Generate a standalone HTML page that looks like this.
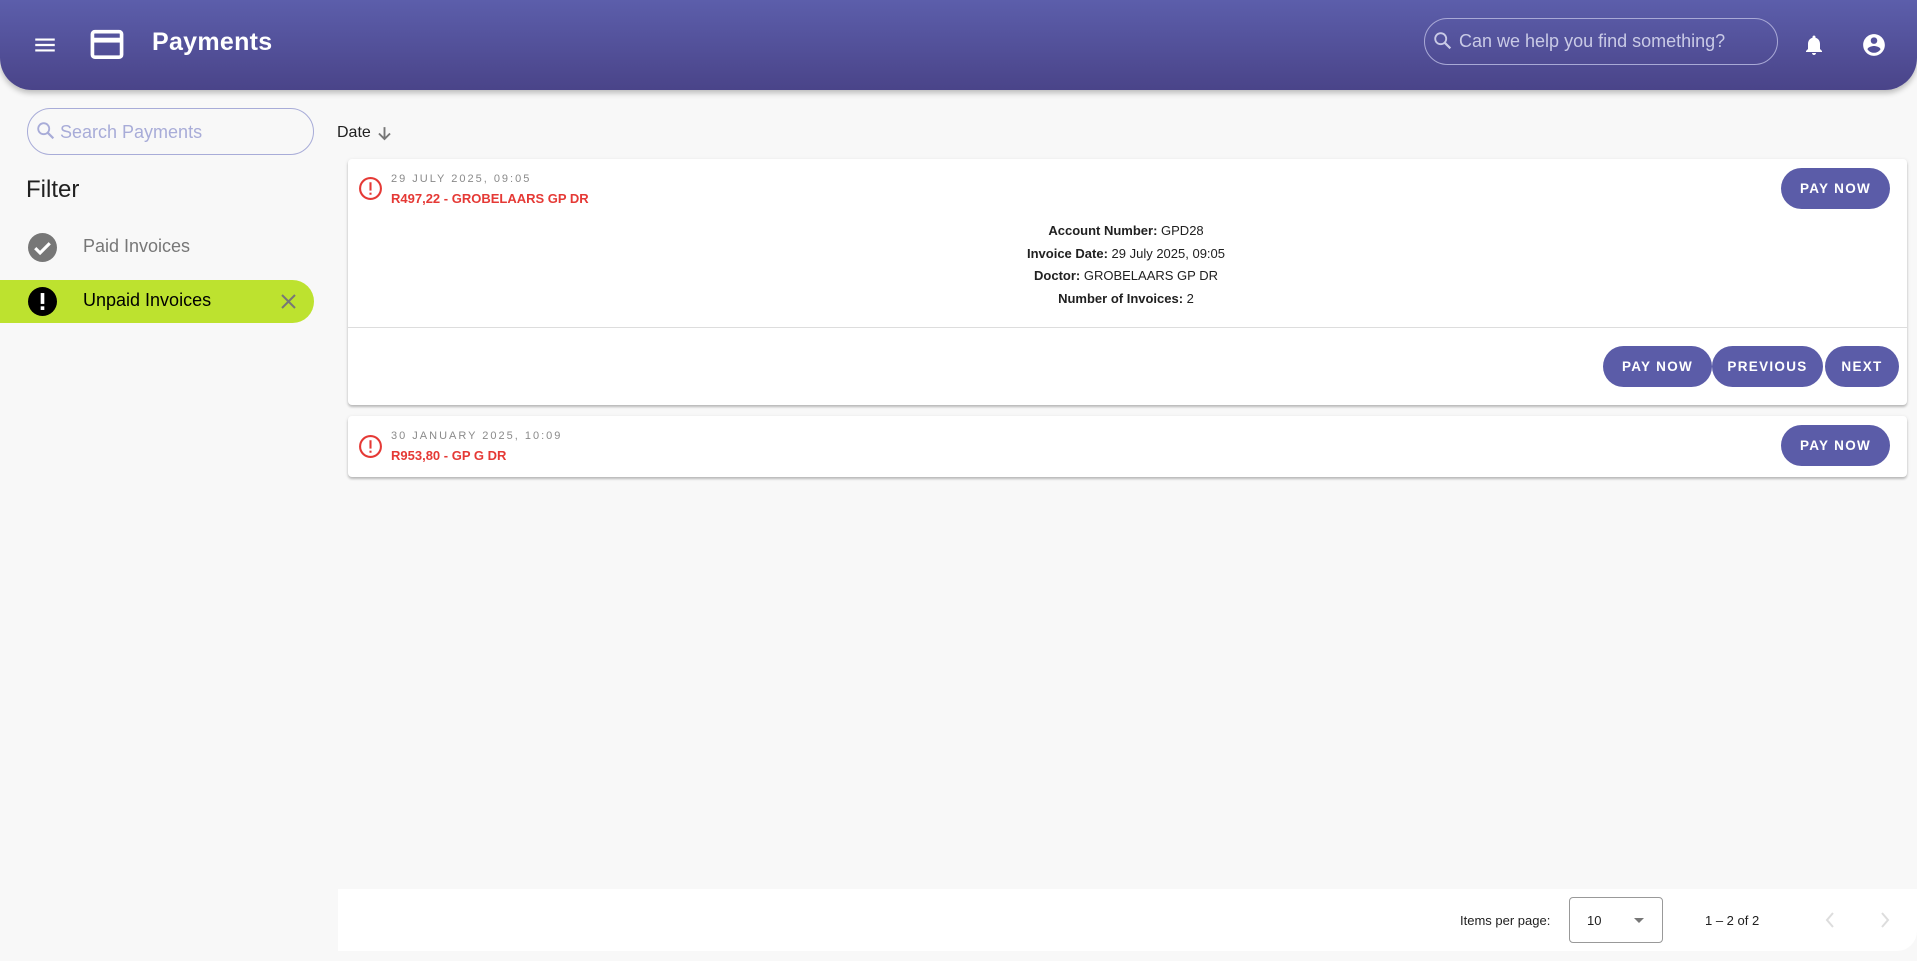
<!DOCTYPE html>
<html><head><meta charset="utf-8"><style>
*{box-sizing:border-box;margin:0;padding:0}
body{width:1917px;height:961px;background:#f8f8f8;font-family:"Liberation Sans",sans-serif;position:relative;overflow:hidden;color:#212121}
.abs{position:absolute}
.hdr{left:0;top:0;width:1917px;height:90px;background:linear-gradient(#5c5eab,#4a4489);border-radius:0 0 32px 32px;box-shadow:0 3px 6px rgba(0,0,0,.25)}
.btn{position:absolute;background:#5b5ca8;color:#fff;border-radius:21px;font-weight:bold;font-size:13.5px;letter-spacing:1.3px;display:flex;align-items:center;justify-content:center;height:41px}
.card{position:absolute;left:348px;width:1559px;background:#fff;border-radius:4px;box-shadow:0 2px 2px rgba(0,0,0,.2),0 1px 4px rgba(0,0,0,.1)}
.dt{position:absolute;left:43px;font-size:11px;letter-spacing:2px;color:#8a8a8a}
.amt{position:absolute;left:43px;font-size:13px;font-weight:bold;color:#e53935}
.det{position:absolute;left:0;width:1556px;text-align:center;font-size:13px;line-height:13px}
</style></head><body>
<div class="abs hdr"></div>
<svg class="abs" style="left:32px;top:32px" width="26" height="26" viewBox="0 0 24 24"><path d="M3 6h18v2H3zm0 5h18v2H3zm0 5h18v2H3z" fill="#fff"/></svg>
<svg class="abs" style="left:90px;top:28px" width="34" height="34" viewBox="0 0 28 28"><rect x="2" y="3" width="24" height="21" rx="2" fill="none" stroke="#fff" stroke-width="3"/><rect x="2" y="8" width="24" height="4" fill="#fff"/></svg>
<div class="abs" style="left:152px;top:28px;color:#fff;font-size:25px;font-weight:bold;letter-spacing:.3px">Payments</div>
<div class="abs" style="left:1424px;top:18px;width:354px;height:47px;border:1px solid #a9a9d6;border-radius:24px"></div>
<svg class="abs" style="left:1432px;top:30px" width="22" height="22" viewBox="0 0 24 24"><circle cx="9.5" cy="9.5" r="6" fill="none" stroke="#c9cae6" stroke-width="2"/><path d="M14 14l6 6" stroke="#c9cae6" stroke-width="2.4"/></svg>
<div class="abs" style="left:1459px;top:31px;color:#c9cae6;font-size:18px">Can we help you find something?</div>
<svg class="abs" style="left:1802px;top:32px" width="24" height="26" viewBox="0 0 24 24"><path d="M12 22c1.1 0 2-.9 2-2h-4c0 1.1.9 2 2 2zm6-6v-5c0-3.1-1.6-5.6-4.5-6.3V4c0-.8-.7-1.5-1.5-1.5s-1.5.7-1.5 1.5v.7C7.6 5.4 6 7.9 6 11v5l-2 2v1h16v-1l-2-2z" fill="#fff"/></svg>
<svg class="abs" style="left:1861px;top:32px" width="26" height="26" viewBox="0 0 24 24"><path d="M12 2C6.5 2 2 6.5 2 12s4.5 10 10 10 10-4.5 10-10S17.5 2 12 2zm0 3c1.7 0 3 1.3 3 3s-1.3 3-3 3-3-1.3-3-3 1.3-3 3-3zm0 14.2c-2.5 0-4.7-1.3-6-3.2 0-2 4-3.1 6-3.1s6 1.1 6 3.1c-1.3 1.9-3.5 3.2-6 3.2z" fill="#fff"/></svg>

<div class="abs" style="left:27px;top:108px;width:287px;height:47px;border:1px solid #a8acd8;border-radius:24px"></div>
<svg class="abs" style="left:35px;top:120px" width="22" height="22" viewBox="0 0 24 24"><circle cx="9.5" cy="9.5" r="6" fill="none" stroke="#a8acd8" stroke-width="2"/><path d="M14 14l6 6" stroke="#a8acd8" stroke-width="2.4"/></svg>
<div class="abs" style="left:60px;top:122px;color:#a8acd8;font-size:18px">Search Payments</div>
<div class="abs" style="left:26px;top:176px;font-size:24px">Filter</div>
<svg class="abs" style="left:28px;top:233px" width="29" height="29" viewBox="0 0 24 24"><circle cx="12" cy="12" r="12" fill="#777"/><path d="M6 12.5l4 4 8-8" fill="none" stroke="#fff" stroke-width="2.6"/></svg>
<div class="abs" style="left:83px;top:236px;color:#777;font-size:18px">Paid Invoices</div>
<div class="abs" style="left:0;top:280px;width:314px;height:43px;background:#bde22f;border-radius:0 22px 22px 0"></div>
<svg class="abs" style="left:28px;top:287px" width="29" height="29" viewBox="0 0 24 24"><circle cx="12" cy="12" r="12" fill="#000"/><rect x="10.5" y="5" width="3" height="9" fill="#fff"/><rect x="10.5" y="16" width="3" height="3" fill="#fff"/></svg>
<div class="abs" style="left:83px;top:290px;color:#000;font-size:18px">Unpaid Invoices</div>
<svg class="abs" style="left:280px;top:293px" width="17" height="17" viewBox="0 0 17 17"><path d="M2 2l13 13M15 2L2 15" stroke="#777" stroke-width="2"/></svg>

<div class="abs" style="left:337px;top:124px;font-size:16px">Date</div>
<svg class="abs" style="left:375px;top:124px" width="19" height="19" viewBox="0 0 24 24"><path d="M12 4v15M5 12l7 7 7-7" fill="none" stroke="#777" stroke-width="2.4"/></svg>

<div class="card" style="top:159px;height:246px">
<svg class="abs" style="left:10px;top:17px" width="25" height="25" viewBox="0 0 24 24"><circle cx="12" cy="12" r="10" fill="none" stroke="#e53935" stroke-width="2"/><rect x="11" y="6" width="2" height="8" fill="#e53935"/><rect x="11" y="16" width="2" height="2" fill="#e53935"/></svg>
<div class="dt" style="top:14px">29 JULY 2025, 09:05</div>
<div class="amt" style="top:32px">R497,22 - GROBELAARS GP DR</div>
<div class="btn" style="left:1433px;top:9px;width:109px">PAY NOW</div>
<div class="det" style="top:65px"><b>Account Number:</b> GPD28</div>
<div class="det" style="top:88px"><b>Invoice Date:</b> 29 July 2025, 09:05</div>
<div class="det" style="top:110px"><b>Doctor:</b> GROBELAARS GP DR</div>
<div class="det" style="top:133px"><b>Number of Invoices:</b> 2</div>
<div class="abs" style="left:0;top:168px;width:1559px;height:1px;background:#ddd"></div>
<div class="btn" style="left:1255px;top:187px;width:109px">PAY NOW</div>
<div class="btn" style="left:1364px;top:187px;width:111px">PREVIOUS</div>
<div class="btn" style="left:1477px;top:187px;width:74px">NEXT</div>
</div>

<div class="card" style="top:416px;height:61px">
<svg class="abs" style="left:10px;top:18px" width="25" height="25" viewBox="0 0 24 24"><circle cx="12" cy="12" r="10" fill="none" stroke="#e53935" stroke-width="2"/><rect x="11" y="6" width="2" height="8" fill="#e53935"/><rect x="11" y="16" width="2" height="2" fill="#e53935"/></svg>
<div class="dt" style="top:14px">30 JANUARY 2025, 10:09</div>
<div class="amt" style="top:32px">R953,80 - GP G DR</div>
<div class="btn" style="left:1433px;top:9px;width:109px">PAY NOW</div>
</div>

<div class="abs" style="left:338px;top:889px;width:1579px;height:62px;background:#fff;border-radius:0 0 20px 0"></div>
<div class="abs" style="left:1460px;top:913px;font-size:13px">Items per page:</div>
<div class="abs" style="left:1569px;top:897px;width:94px;height:46px;border:1px solid #999;border-radius:4px"></div>
<div class="abs" style="left:1587px;top:913px;font-size:13px">10</div>
<div class="abs" style="left:1634px;top:918px;width:0;height:0;border-left:5px solid transparent;border-right:5px solid transparent;border-top:5px solid #777"></div>
<div class="abs" style="left:1705px;top:913px;font-size:13px">1 – 2 of 2</div>
<svg class="abs" style="left:1822px;top:910px" width="16" height="20" viewBox="0 0 16 20"><path d="M11 3L5 10l6 7" fill="none" stroke="#ddd" stroke-width="2"/></svg>
<svg class="abs" style="left:1877px;top:910px" width="16" height="20" viewBox="0 0 16 20"><path d="M5 3l6 7-6 7" fill="none" stroke="#ddd" stroke-width="2"/></svg>
</body></html>
